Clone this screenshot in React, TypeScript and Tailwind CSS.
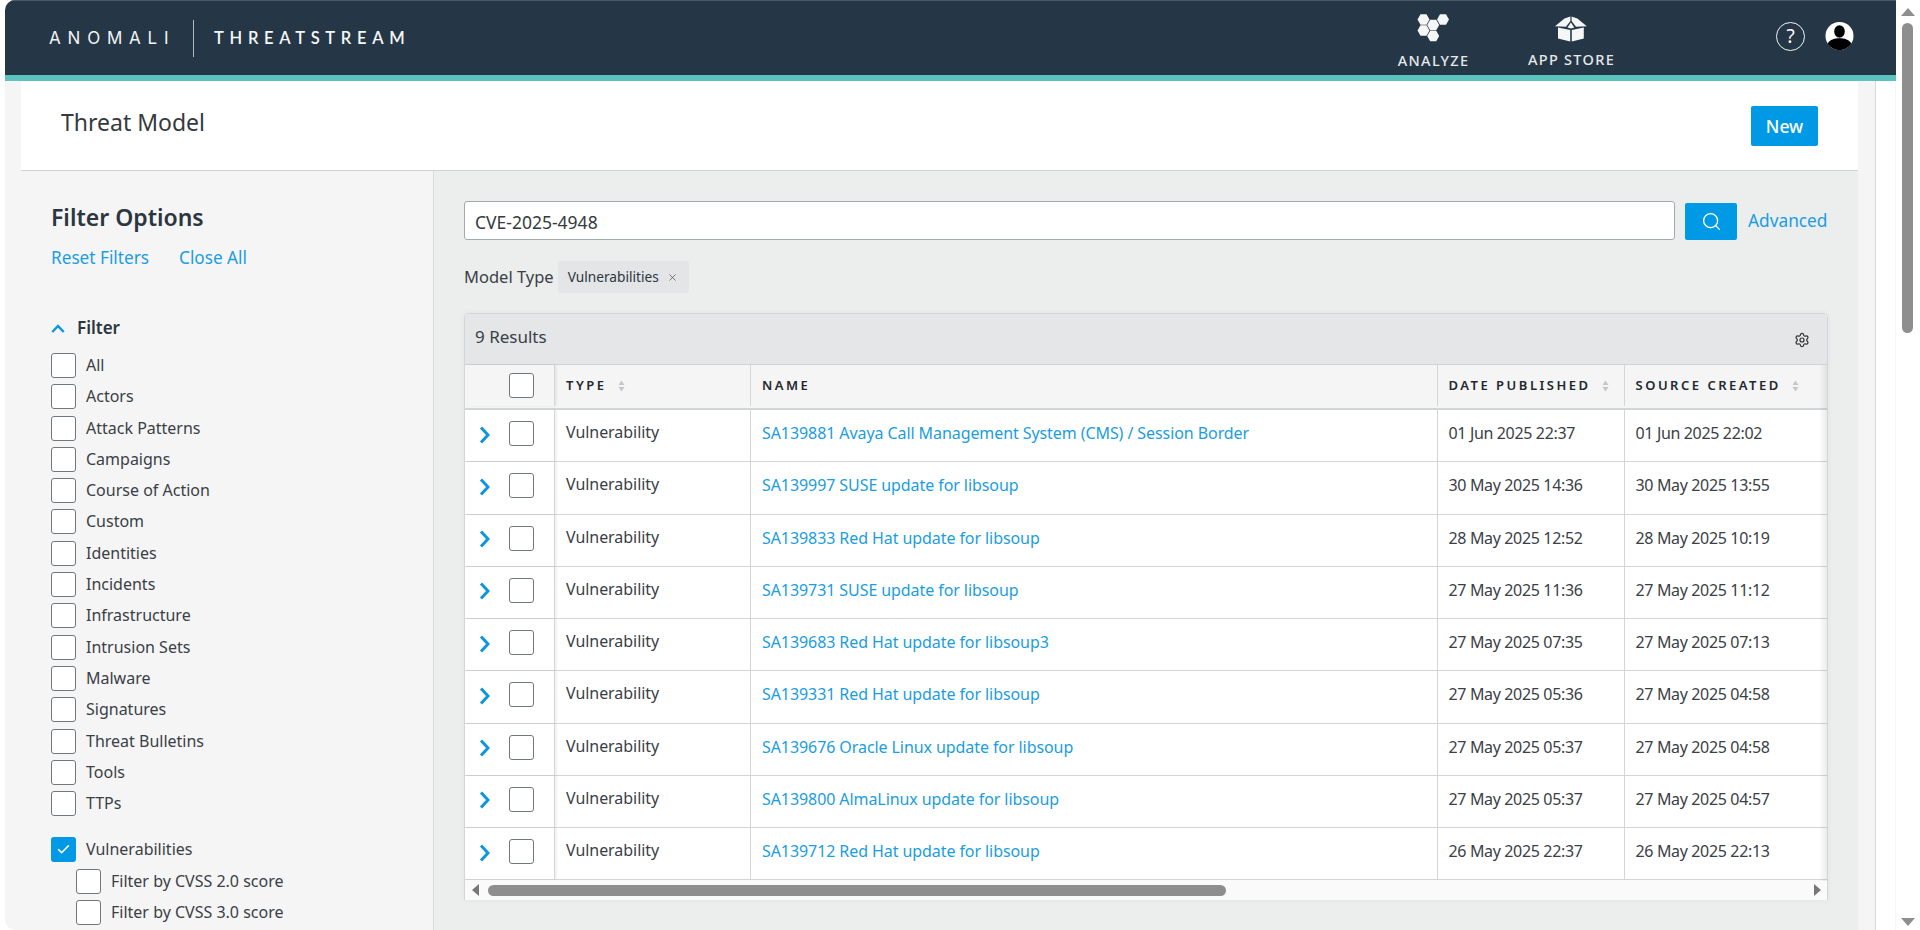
import React from "react";
import { Search, Settings, X, Check } from "lucide-react";

const filters = ["All","Actors","Attack Patterns","Campaigns","Course of Action","Custom","Identities","Incidents","Infrastructure","Intrusion Sets","Malware","Signatures","Threat Bulletins","Tools","TTPs"];

const rows = [
  ["SA139881 Avaya Call Management System (CMS) / Session Border","01 Jun 2025 22:37","01 Jun 2025 22:02"],
  ["SA139997 SUSE update for libsoup","30 May 2025 14:36","30 May 2025 13:55"],
  ["SA139833 Red Hat update for libsoup","28 May 2025 12:52","28 May 2025 10:19"],
  ["SA139731 SUSE update for libsoup","27 May 2025 11:36","27 May 2025 11:12"],
  ["SA139683 Red Hat update for libsoup3","27 May 2025 07:35","27 May 2025 07:13"],
  ["SA139331 Red Hat update for libsoup","27 May 2025 05:36","27 May 2025 04:58"],
  ["SA139676 Oracle Linux update for libsoup","27 May 2025 05:37","27 May 2025 04:58"],
  ["SA139800 AlmaLinux update for libsoup","27 May 2025 05:37","27 May 2025 04:57"],
  ["SA139712 Red Hat update for libsoup","26 May 2025 22:37","26 May 2025 22:13"],
];

function Box() {
  return <span className="block h-[25px] w-[25px] shrink-0 rounded-[3px] border border-[#70787e] bg-white" />;
}

function Sort() {
  return (
    <svg width="7" height="12" viewBox="0 0 7 12" className="ml-[11px] shrink-0">
      <path d="M3.5 0.5 L6.5 5 L0.5 5 Z M3.5 11.5 L6.5 7 L0.5 7 Z" fill="#c4c8cb" />
    </svg>
  );
}

function AnalyzeIcon() {
  const hex = (cx: number, cy: number, r: number) => {
    const h = r * 0.866;
    return `${cx - r},${cy} ${cx - r / 2},${cy - h} ${cx + r / 2},${cy - h} ${cx + r},${cy} ${cx + r / 2},${cy + h} ${cx - r / 2},${cy + h}`;
  };
  return (
    <svg width="32" height="28" viewBox="0 0 32 28">
      <polygon points={hex(6.5, 5.5, 6)} fill="#f5f7f7" />
      <polygon points={hex(26, 5.5, 6)} fill="#f5f7f7" />
      <polygon points={hex(6.5, 16.5, 6)} fill="#f5f7f7" />
      <polygon points={hex(16.2, 22, 6)} fill="#f5f7f7" />
      <polygon points={hex(16.2, 11, 6)} fill="#f5f7f7" />
    </svg>
  );
}

function BoxIcon() {
  return (
    <svg width="32" height="26" viewBox="0 0 32 26">
      <path d="M3 11.5 L15.2 14 L15.2 25.5 L3 22.5 Z" fill="#f5f7f7" />
      <path d="M16.8 14 L28.8 11.5 L28.8 22.5 L16.8 25.5 Z" fill="#f5f7f7" />
      <path d="M0 10.2 L9.5 2.6 L15.4 0.6 L15.4 5 L11 10.8 Z" fill="#f5f7f7" />
      <path d="M31.8 10.2 L22.3 2.6 L16.6 0.6 L16.6 5 L21 10.8 Z" fill="#f5f7f7" />
      <path d="M15.9 6.5 L12.5 11.5 L15.9 12.4 L19.3 11.5 Z" fill="#f5f7f7" />
    </svg>
  );
}

function UserIcon() {
  return (
    <svg width="29" height="28" viewBox="0 0 29 28">
      <circle cx="14.5" cy="14" r="14" fill="#ffffff" />
      <ellipse cx="14.5" cy="9.5" rx="5.3" ry="6.2" fill="#000000" />
      <path d="M2.6 21.5 C5 17.5 9.5 16.2 14.5 16.2 C19.5 16.2 24 17.5 26.4 21.5 C24 25.5 19.5 28 14.5 28 C9.5 28 5 25.5 2.6 21.5 Z" fill="#000000" />
    </svg>
  );
}

function Cell({ className, children }: { className?: string; children?: React.ReactNode }) {
  return <div className={`border-r border-[#d3d6d9] ${className ?? ""}`}>{children}</div>;
}

export default function App() {
  return (
    <div className="flex h-[930px] w-[1920px] overflow-hidden bg-white text-[#343a40] [font-family:'Noto_Sans',sans-serif]">
      <div className="ml-[5px] flex w-[1891px] flex-col overflow-hidden rounded-l-[10px] bg-[#f5f5f5]">
        <header className="flex h-[81px] shrink-0 items-start border-t border-b-[6px] border-t-[#4a5a68] border-b-[#5bc2bd] bg-[#253746] text-white">
          <div className="ml-[44px] flex h-[74px] items-center">
            <span className="w-[125px] whitespace-nowrap text-[17px] font-normal leading-none tracking-[6.8px] text-[#f2f4f4] [font-family:Inter,sans-serif]">ANOMALI</span>
            <span className="ml-[19px] h-[37px] w-[1px] bg-[#b4b9bd]" />
            <span className="ml-[20px] whitespace-nowrap text-[16.5px] font-semibold leading-none tracking-[5.7px] text-[#f5f7f7] [font-family:Lato,sans-serif]">THREATSTREAM</span>
          </div>
          <div className="ml-auto flex">
            <div className="mr-[58px] flex w-[72px] flex-col items-center">
              <div className="mr-[1px] mt-[13px]"><AnalyzeIcon /></div>
              <span className="mt-[9px] whitespace-nowrap text-[14.5px] font-medium leading-[18px] tracking-[1.3px] text-[#e6e9ea]">ANALYZE</span>
            </div>
            <div className="mr-[160.5px] flex w-[88px] flex-col items-center">
              <div className="mr-[2px] mt-[15px]"><BoxIcon /></div>
              <span className="mt-[8px] whitespace-nowrap text-[14.5px] font-medium leading-[18px] tracking-[1.3px] text-[#e6e9ea]">APP STORE</span>
            </div>
            <div className="mt-[21px] flex h-[29px] w-[29px] items-center justify-center rounded-full border-[1.5px] border-[#f2f4f4] text-[19px] leading-none">?</div>
            <div className="ml-[20px] mr-[42px] mt-[21px]"><UserIcon /></div>
          </div>
        </header>
        <div className="flex min-h-0 flex-1">
          <div className="ml-[16px] flex w-[1837px] flex-col">
            <div className="flex h-[90px] shrink-0 items-center justify-between border-b border-[#cfd2d3] bg-white pl-[40px] pr-[40px]">
              <h1 className="mb-[6px] text-[23px] leading-none text-[#343a40]">Threat Model</h1>
              <button className="mt-[1px] h-[40px] w-[67px] rounded-[2px] bg-[#0099e5] text-[17.5px] font-medium text-white">New</button>
            </div>
            <div className="flex min-h-0 flex-1">
              <aside className="w-[413px] shrink-0 border-r border-[#d8dadb] bg-[#f5f5f5] pl-[30px]">
                <h2 className="mt-[31px] text-[23px] font-semibold leading-[30px] text-[#2b3640]">Filter Options</h2>
                <div className="mt-[15px] flex text-[17.2px] leading-[22px] text-[#1a9de2]">
                  <span>Reset Filters</span>
                  <span className="ml-[30px]">Close All</span>
                </div>
                <div className="mt-[47px] flex h-[24px] items-center">
                  <svg width="14" height="9" viewBox="0 0 14 9" fill="none" stroke="#0d96df" strokeWidth="2.5"><path d="M1.3 8 L7 2 L12.7 8" /></svg>
                  <span className="ml-[12px] text-[17px] font-semibold text-[#2b3640]">Filter</span>
                </div>
                <div className="mt-[13px]">
                  {filters.map((f) => (
                    <label key={f} className="flex h-[31.3px] items-start text-[16px] leading-[25px] text-[#3a4046]">
                      <Box />
                      <span className="ml-[10px]">{f}</span>
                    </label>
                  ))}
                  <label className="mt-[15px] flex h-[31.3px] items-start text-[16px] leading-[25px] text-[#3a4046]">
                    <span className="flex h-[25px] w-[25px] items-center justify-center rounded-[3px] bg-[#0099e5]">
                      <Check size={15} strokeWidth={2.5} className="text-white" />
                    </span>
                    <span className="ml-[10px]">Vulnerabilities</span>
                  </label>
                  {["Filter by CVSS 2.0 score", "Filter by CVSS 3.0 score"].map((f) => (
                    <label key={f} className="ml-[25px] flex h-[31.3px] items-start text-[16px] leading-[25px] text-[#3a4046]">
                      <Box />
                      <span className="ml-[10px]">{f}</span>
                    </label>
                  ))}
                </div>
              </aside>
              <main className="min-w-0 flex-1 bg-[#eceeee] pl-[30px] pr-[30px]">
                <div className="mt-[30px] flex h-[39px] items-center">
                  <div className="flex h-[39px] w-[1211px] items-center rounded-[3px] border border-[#a3aaae] bg-white pl-[10px] pt-[4px] text-[17.5px] text-[#343a40]">CVE-2025-4948</div>
                  <button className="ml-[10px] mt-[2px] flex h-[37px] w-[52px] items-center justify-center rounded-[2px] bg-[#0099e5] text-white">
                    <Search size={21} strokeWidth={1.5} />
                  </button>
                  <span className="ml-[11px] whitespace-nowrap text-[17.3px] text-[#1a9de2]">Advanced</span>
                </div>
                <div className="mt-[21px] flex h-[32px] items-center">
                  <span className="text-[16.5px] text-[#3a4046]">Model Type</span>
                  <span className="ml-[4px] flex h-[32px] w-[131px] items-center rounded-[2px] bg-[#e3e5e7] pl-[10px] text-[13.7px] text-[#2b3640]">
                    Vulnerabilities
                    <X size={11} strokeWidth={1.5} className="ml-[8px] text-[#444]" />
                  </span>
                </div>
                <section className="mt-[20px] h-[587px] w-[1364px] overflow-hidden rounded-t-[5px] border-x border-t border-[#d3d6d8] bg-white shadow-[0_0_6px_rgba(0,0,0,0.05)]">
                  <div className="flex h-[51px] items-center justify-between border-b border-[#cfd2d5] bg-[#e4e6e8] pl-[10px] pr-[17px]">
                    <span className="mb-[5px] text-[17px] text-[#3a4046]">9 Results</span>
                    <Settings size={16} strokeWidth={1.8} className="mt-[1px] text-[#333]" />
                  </div>
                  <div className="relative">
                    <div className="grid h-[45px] grid-cols-[90px_196px_686.5px_187px_1fr] border-b-2 border-[#d3d6d9] bg-[#f5f5f5] pb-[2px] text-[13px] font-semibold tracking-[2.5px] text-[#22282e]">
                      <Cell className="flex items-center pl-[44px] shadow-[2px_0_2px_rgba(0,0,0,0.06)]"><Box /></Cell>
                      <Cell className="flex items-center pl-[11px]">TYPE<Sort /></Cell>
                      <Cell className="flex items-center pl-[11px]">NAME</Cell>
                      <Cell className="flex items-center pl-[11px]">DATE PUBLISHED<Sort /></Cell>
                      <div className="flex items-center pl-[11px] whitespace-nowrap">SOURCE CREATED<Sort /></div>
                    </div>
                    {rows.map((r) => (
                      <div key={r[0]} className="grid h-[52.25px] grid-cols-[90px_196px_686.5px_187px_1fr] border-b border-[#d3d6d9] bg-white text-[16px] text-[#3a4046]">
                        <Cell className="flex pl-[14px] pt-[11px] shadow-[2px_0_2px_rgba(0,0,0,0.06)]">
                          <svg width="11" height="18" viewBox="0 0 11 18" fill="none" stroke="#0d96df" strokeWidth="3" className="mt-[4.5px] shrink-0"><path d="M2 1.5 L9 9 L2 16.5" /></svg>
                          <span className="ml-[19px]"><Box /></span>
                        </Cell>
                        <Cell className="pl-[11px] pt-[11px] leading-[22px] tracking-[-0.05px]">Vulnerability</Cell>
                        <Cell className="pl-[11px] pt-[12px] leading-[22px] tracking-[-0.08px] text-[#1a9de2]">{r[0]}</Cell>
                        <Cell className="pl-[11px] pt-[12px] leading-[22px] tracking-[-0.35px]">{r[1]}</Cell>
                        <div className="pl-[11px] pt-[12px] leading-[22px] tracking-[-0.35px]">{r[2]}</div>
                      </div>
                    ))}
                    <div className="pointer-events-none absolute right-0 top-0 h-[516px] w-[8px] bg-gradient-to-l from-[#00000014] to-transparent" />
                    <div className="flex h-[20px] items-center bg-[#fafafa] pl-[7px] pr-[6px]">
                      <svg width="7" height="12" viewBox="0 0 7 12"><path d="M7 0 L7 12 L0 6 Z" fill="#777" /></svg>
                      <span className="ml-[9px] h-[11px] w-[738px] rounded-full bg-[#8e8e8e]" />
                      <svg width="7" height="12" viewBox="0 0 7 12" className="ml-auto"><path d="M0 0 L0 12 L7 6 Z" fill="#777" /></svg>
                    </div>
                  </div>
                </section>
              </main>
            </div>
          </div>
          <div className="ml-[17px] w-[20px] border-l border-[#d8dadb] bg-white" />
        </div>
      </div>
      <div className="flex w-[24px] shrink-0 flex-col items-center bg-white pt-[8px]">
        <svg width="14" height="8" viewBox="0 0 14 8" className="mr-[1px]"><path d="M7 0 L14 8 L0 8 Z" fill="#8e8e8e" /></svg>
        <div className="mr-[1px] mt-[7px] h-[310px] w-[11px] rounded-full bg-[#8e8e8e]" />
        <svg width="14" height="8" viewBox="0 0 14 8" className="mr-[1px] mt-auto mb-[4px]"><path d="M7 8 L14 0 L0 0 Z" fill="#8e8e8e" /></svg>
      </div>
    </div>
  );
}
